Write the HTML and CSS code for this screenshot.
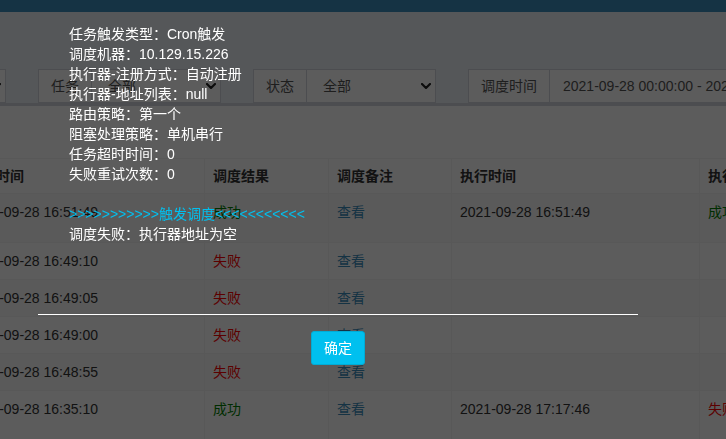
FILE: index.html
```html
<!DOCTYPE html>
<html lang="zh-CN">
<head>
<meta charset="utf-8">
<title>调度日志</title>
<link rel="stylesheet" href="styles.css">
</head>
<body>
<div class="wrapper">
  <header class="main-header"></header>
  <section class="content">
    <div class="filters">
      <div class="col">
        <div class="input-group">
          <span class="addon">执行器</span>
          <div class="select"><span>全部</span><svg class="chev" viewBox="0 0 10 6" width="10" height="6"><polyline points="1,1 5,5 9,1"/></svg></div>
        </div>
      </div>
      <div class="col">
        <div class="input-group">
          <span class="addon">任务</span>
          <div class="select"><span>全部</span><svg class="chev" viewBox="0 0 10 6" width="10" height="6"><polyline points="1,1 5,5 9,1"/></svg></div>
        </div>
      </div>
      <div class="col">
        <div class="input-group">
          <span class="addon">状态</span>
          <div class="select"><span>全部</span><svg class="chev" viewBox="0 0 10 6" width="10" height="6"><polyline points="1,1 5,5 9,1"/></svg></div>
        </div>
      </div>
      <div class="col col-wide">
        <div class="input-group">
          <span class="addon">调度时间</span>
          <div class="input">2021-09-28 00:00:00 - 2021-09-28 23:59:59</div>
        </div>
      </div>
    </div>

    <div class="box">
      <table class="log-table">
        <colgroup>
          <col class="c-id"><col class="c-trigger"><col class="c-result"><col class="c-msg"><col class="c-handle"><col class="c-hresult"><col class="c-hmsg"><col class="c-op">
        </colgroup>
        <thead>
          <tr><th>任务ID</th><th>调度时间</th><th>调度结果</th><th>调度备注</th><th>执行时间</th><th>执行结果</th><th>执行备注</th><th>操作</th></tr>
        </thead>
        <tbody>
          <tr><td>1</td><td>2021-09-28 16:51:49</td><td><span class="ok">成功</span></td><td><a>查看</a></td><td>2021-09-28 16:51:49</td><td><span class="ok">成功</span></td><td></td><td><button class="btn-op">操作</button></td></tr>
          <tr><td>1</td><td>2021-09-28 16:49:10</td><td><span class="fail">失败</span></td><td><a>查看</a></td><td></td><td></td><td></td><td></td></tr>
          <tr><td>1</td><td>2021-09-28 16:49:05</td><td><span class="fail">失败</span></td><td><a>查看</a></td><td></td><td></td><td></td><td></td></tr>
          <tr><td>1</td><td>2021-09-28 16:49:00</td><td><span class="fail">失败</span></td><td><a>查看</a></td><td></td><td></td><td></td><td></td></tr>
          <tr><td>1</td><td>2021-09-28 16:48:55</td><td><span class="fail">失败</span></td><td><a>查看</a></td><td></td><td></td><td></td><td></td></tr>
          <tr><td>1</td><td>2021-09-28 16:35:10</td><td><span class="ok">成功</span></td><td><a>查看</a></td><td>2021-09-28 17:17:46</td><td><span class="fail">失败</span></td><td></td><td><button class="btn-op">操作</button></td></tr>
        </tbody>
      </table>
    </div>
  </section>
</div>

<div class="backdrop"></div>

<div class="modal">
  <div class="modal-body">
    <p class="trigger-msg">任务触发类型：Cron触发<br>调度机器：10.129.15.226<br>执行器-注册方式：自动注册<br>执行器-地址列表：null<br>路由策略：第一个<br>阻塞处理策略：单机串行<br>任务超时时间：0<br>失败重试次数：0<br><br><span class="hl">&gt;&gt;&gt;&gt;&gt;&gt;&gt;&gt;&gt;&gt;&gt;触发调度&lt;&lt;&lt;&lt;&lt;&lt;&lt;&lt;&lt;&lt;&lt;</span><br>调度失败：执行器地址为空</p>
  </div>
  <div class="modal-footer">
    <button class="btn-ok">确定</button>
  </div>
</div>
</body>
</html>
```

FILE: styles.css
```css
html, body {
  margin: 0;
  padding: 0;
  width: 726px;
  height: 439px;
  overflow: hidden;
}
body {
  background: #ecf0f5;
  font-family: "Liberation Sans", "Noto Sans CJK SC", sans-serif;
  font-size: 14px;
  line-height: 20px;
  color: #333;
}
.main-header {
  height: 12px;
  background: #3c8dbc;
}
.content {
  margin-left: -193px;
  width: 1500px;
}
.filters {
  display: flex;
  padding-top: 57px;
}
.col {
  flex: 0 0 215px;
  box-sizing: border-box;
  padding: 0 16px;
}
.col-wide { flex-basis: 430px; }
.input-group {
  display: flex;
  height: 34px;
}
.addon {
  box-sizing: border-box;
  height: 34px;
  padding: 6px 12px;
  border: 1px solid #d2d6de;
  background: #fff;
  color: #555;
  white-space: nowrap;
}
.select, .input {
  flex: 1;
  box-sizing: border-box;
  height: 34px;
  margin-left: -1px;
  border: 1px solid #d2d6de;
  background: #fff;
  color: #555;
  display: flex;
  align-items: center;
  white-space: nowrap;
  overflow: hidden;
}
.select { padding: 0 4px 0 16px; justify-content: space-between; }
.input { padding: 0 12px 0 13px; }
.chev {
  fill: none;
  stroke: #222;
  stroke-width: 2.2;
  stroke-linecap: round;
  stroke-linejoin: round;
}
.box {
  margin-left: 16px;
  background: #fff;
  border-top: 3px solid #d2d6de;
  padding: 52px 10px 20px;
}
.log-table {
  border-collapse: collapse;
  table-layout: fixed;
  width: 1240px;
}
.c-id { width: 126px; }
.c-trigger { width: 245px; }
.c-result { width: 124px; }
.c-msg { width: 123px; }
.c-handle { width: 248px; }
.c-hresult { width: 150px; }
.c-hmsg { width: 124px; }
.c-op { width: 100px; }
.log-table th, .log-table td {
  border: 1px solid #f4f4f4;
  text-align: left;
  vertical-align: top;
  white-space: nowrap;
  overflow: hidden;
}
.log-table th {
  padding: 7px 8px;
  font-weight: bold;
}
.log-table td { padding: 8px; }
.log-table tbody tr:nth-child(odd) { background: #f9f9f9; }
.log-table a { color: #3c8dbc; }
.ok { color: green; }
.fail { color: red; }
.btn-op {
  height: 32px;
  font: inherit;
  border: 1px solid #ddd;
  background: #f4f4f4;
}
.backdrop {
  position: fixed;
  inset: 0;
  background: rgba(0, 0, 0, 0.64);
}
.modal {
  position: fixed;
  top: 14px;
  left: 38px;
  width: 600px;
  color: #fff;
}
.modal-body {
  padding: 10px 31px 70px;
}
.trigger-msg { margin: 0; }
.hl { color: #00c0ef; }
.modal-footer {
  border-top: 1px solid #fff;
  padding: 16px 15px 15px;
  text-align: center;
}
.btn-ok {
  font: inherit;
  color: #fff;
  background: #00c0ef;
  border: 1px solid #00acd6;
  border-radius: 3px;
  padding: 6px 12px;
  line-height: 20px;
}
```
